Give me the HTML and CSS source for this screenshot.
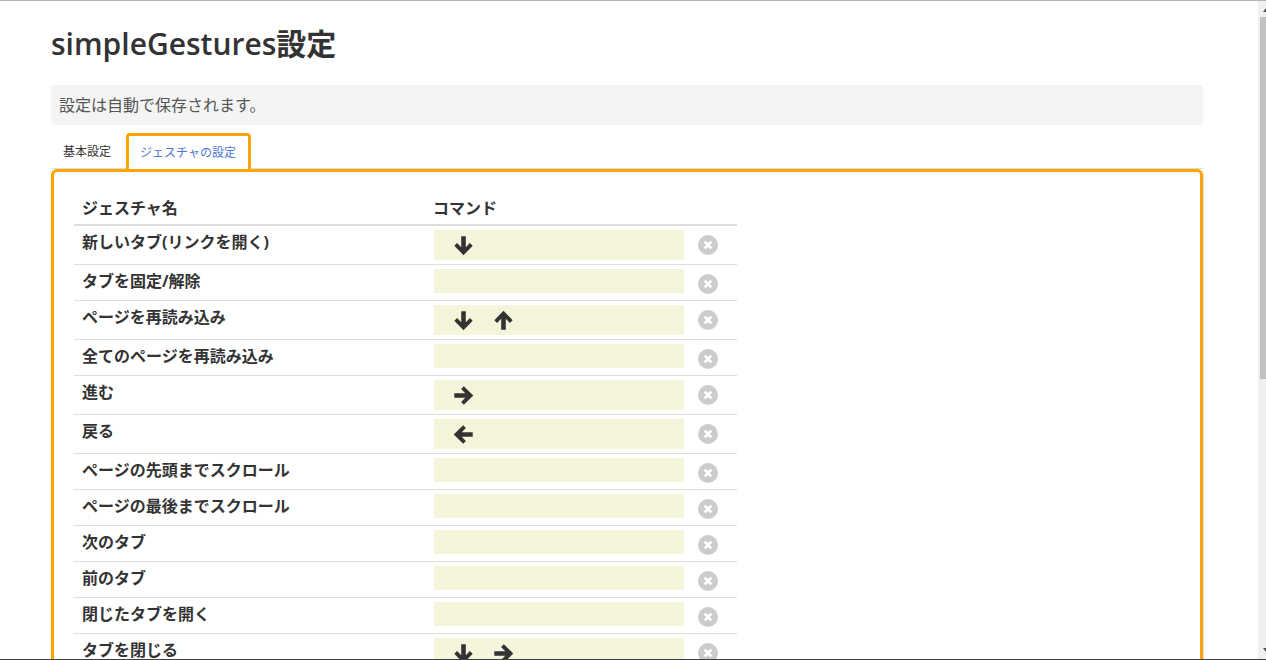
FILE: index.html
```html
<!DOCTYPE html>
<html lang="ja">
<head>
<meta charset="utf-8">
<title>simpleGestures設定</title>
<link rel="stylesheet" href="styles.css">
</head>
<body>
<div class="frame">
  <main class="page">
    <h1 class="title">simpleGestures設定</h1>
    <p class="notice">設定は自動で保存されます。</p>
    <ul class="tabs">
      <li class="tab">基本設定</li>
      <li class="tab tab-active">ジェスチャの設定</li>
    </ul>
    <section class="panel">
      <table class="gestures">
        <thead>
          <tr><th class="col-name">ジェスチャ名</th><th class="col-cmd">コマンド</th><th class="col-x"></th></tr>
        </thead>
        <tbody>
          <tr><td class="name">新しいタブ(リンクを開く)</td><td class="cmd"><div class="field"><svg class="arrow" viewBox="0 0 20 20"><use href="#down"/></svg></div></td><td class="x"><span class="close"><svg viewBox="0 0 20 20"><use href="#cross"/></svg></span></td></tr>
          <tr><td class="name">タブを固定/解除</td><td class="cmd"><div class="field field-empty"></div></td><td class="x"><span class="close"><svg viewBox="0 0 20 20"><use href="#cross"/></svg></span></td></tr>
          <tr><td class="name">ページを再読み込み</td><td class="cmd"><div class="field"><svg class="arrow" viewBox="0 0 20 20"><use href="#down"/></svg><svg class="arrow" viewBox="0 0 20 20"><use href="#up"/></svg></div></td><td class="x"><span class="close"><svg viewBox="0 0 20 20"><use href="#cross"/></svg></span></td></tr>
          <tr><td class="name">全てのページを再読み込み</td><td class="cmd"><div class="field field-empty"></div></td><td class="x"><span class="close"><svg viewBox="0 0 20 20"><use href="#cross"/></svg></span></td></tr>
          <tr><td class="name">進む</td><td class="cmd"><div class="field"><svg class="arrow" viewBox="0 0 20 20"><use href="#right"/></svg></div></td><td class="x"><span class="close"><svg viewBox="0 0 20 20"><use href="#cross"/></svg></span></td></tr>
          <tr><td class="name">戻る</td><td class="cmd"><div class="field"><svg class="arrow" viewBox="0 0 20 20"><use href="#left"/></svg></div></td><td class="x"><span class="close"><svg viewBox="0 0 20 20"><use href="#cross"/></svg></span></td></tr>
          <tr><td class="name">ページの先頭までスクロール</td><td class="cmd"><div class="field field-empty"></div></td><td class="x"><span class="close"><svg viewBox="0 0 20 20"><use href="#cross"/></svg></span></td></tr>
          <tr><td class="name">ページの最後までスクロール</td><td class="cmd"><div class="field field-empty"></div></td><td class="x"><span class="close"><svg viewBox="0 0 20 20"><use href="#cross"/></svg></span></td></tr>
          <tr><td class="name">次のタブ</td><td class="cmd"><div class="field field-empty"></div></td><td class="x"><span class="close"><svg viewBox="0 0 20 20"><use href="#cross"/></svg></span></td></tr>
          <tr><td class="name">前のタブ</td><td class="cmd"><div class="field field-empty"></div></td><td class="x"><span class="close"><svg viewBox="0 0 20 20"><use href="#cross"/></svg></span></td></tr>
          <tr><td class="name">閉じたタブを開く</td><td class="cmd"><div class="field field-empty"></div></td><td class="x"><span class="close"><svg viewBox="0 0 20 20"><use href="#cross"/></svg></span></td></tr>
          <tr><td class="name">タブを閉じる</td><td class="cmd"><div class="field"><svg class="arrow" viewBox="0 0 20 20"><use href="#down"/></svg><svg class="arrow" viewBox="0 0 20 20"><use href="#right"/></svg></div></td><td class="x"><span class="close"><svg viewBox="0 0 20 20"><use href="#cross"/></svg></span></td></tr>
        </tbody>
      </table>
    </section>
  </main>
  <div class="scrollbar">
    <span class="sb-btn sb-up"></span>
    <span class="sb-thumb"></span>
    <span class="sb-track"></span>
    <span class="sb-btn sb-down"></span>
  </div>
</div>
<div class="bottom-line"></div>
<svg class="defs" width="0" height="0">
  <defs>
    <path id="down" d="M8 2h4v9.500l3.600-3.600 2.400 2.400L10 18.500 2 10.300l2.400-2.400L8 11.500z"/>
    <path id="up" d="M8 18h4V8.500l3.600 3.600 2.400-2.400L10 1.500 2 9.700l2.400 2.400L8 8.500z"/>
    <path id="right" d="M2 8v4h9.500l-3.600 3.600 2.400 2.400L18.500 10 10.300 2 7.900 4.400 11.500 8z"/>
    <path id="left" d="M18 8v4H8.500l3.600 3.600-2.400 2.400L1.500 10 9.700 2l2.400 2.400L8.500 8z"/>
    <path id="cross" d="M7.600 5.700 10 8.100l2.400-2.400 1.900 1.900L11.900 10l2.400 2.400-1.900 1.900L10 11.900l-2.400 2.400-1.900-1.900L8.100 10 5.700 7.600z"/>
  </defs>
</svg>
</body>
</html>
```
FILE: styles.css
```css
* { box-sizing: border-box; }
html, body { margin: 0; height: 660px; overflow: hidden; background: #fff; }
body {
  font-family: "Open Sans", "Noto Sans CJK JP", sans-serif;
  color: #333;
  border-top: 1px solid #b5b5b5;
}
.frame { display: flex; height: 658px; }
.page { flex: 1; min-width: 0; overflow: hidden; padding: 0 55px 0 51px; }
.title { margin: 25px 0 0; font-size: 30px; line-height: 36px; font-weight: 600; }
.notice {
  margin: 23px 0 0;
  height: 40px;
  padding: 0 8px;
  line-height: 40px;
  font-size: 16px;
  color: #555;
  background: #f4f4f4;
  border-radius: 4px;
}
.tabs { display: flex; list-style: none; margin: 8px 0 0; padding: 0; height: 36px; border-bottom: 1px solid #ddd; }
.tab { padding: 0 13px 0 12px; font-size: 12px; line-height: 37px; height: 36px; }
.tab-active {
  position: relative;
  z-index: 1;
  margin-left: 2px;
  padding: 0 12px 0 11px;
  color: #4a76d8;
  background: #fff;
  border: 3px solid orange;
  border-bottom: 0;
  border-radius: 4px 4px 0 0;
  line-height: 34px;
}
.panel {
  border: 3px solid orange;
  border-radius: 6px;
  box-shadow: 1px 0 0 #ddd;
  padding: 20px;
  height: 600px;
}
.gestures { width: 663px; border-collapse: collapse; table-layout: fixed; font-size: 16px; }
.gestures th { text-align: left; font-weight: 700; height: 33px; padding: 0 8px 3px; border-bottom: 2px solid #ddd; }
.col-name { width: 360px; }
.col-cmd { width: 264px; }
.gestures .col-cmd { padding-left: 0; text-indent: -1px; }
.gestures td { padding: 0; border-bottom: 1px solid #ddd; vertical-align: top; }
.gestures .name { padding: 6px 8px 0; font-weight: 700; line-height: 20px; }
.field { display: flex; align-items: center; gap: 17px; width: 250px; height: 30px; margin: 4px 0; padding-left: 18px; background: #f5f5dc; }
.field-empty { height: 24px; margin-bottom: 0; }
.arrow { width: 23px; height: 23px; fill: #333; }
.gestures .x { padding: 9px 0 6px; }
.close { display: block; width: 20px; height: 20px; border-radius: 50%; background: #ccc; }
.close svg { display: block; width: 20px; height: 20px; fill: #fff; }
.scrollbar { width: 8px; margin-top: -1px; height: 659px; display: flex; flex-direction: column; background: #f0f0f0; overflow: hidden; }
.sb-btn { height: 17px; flex: none; position: relative; }
.sb-up::after, .sb-down::after { content: ""; position: absolute; left: 5px; border: 3px solid transparent; }
.sb-up::after { top: 8px; border-top: 0; border-bottom: 4px solid #505050; }
.sb-down::after { top: 6px; border-bottom: 0; border-top: 4px solid #505050; }
.sb-thumb { height: 362px; flex: none; background: #c1c1c1; margin-left: 2px; }
.sb-track { flex: 1; }
.bottom-line { height: 1px; background: #3a4045; }
.defs { position: absolute; }
```
